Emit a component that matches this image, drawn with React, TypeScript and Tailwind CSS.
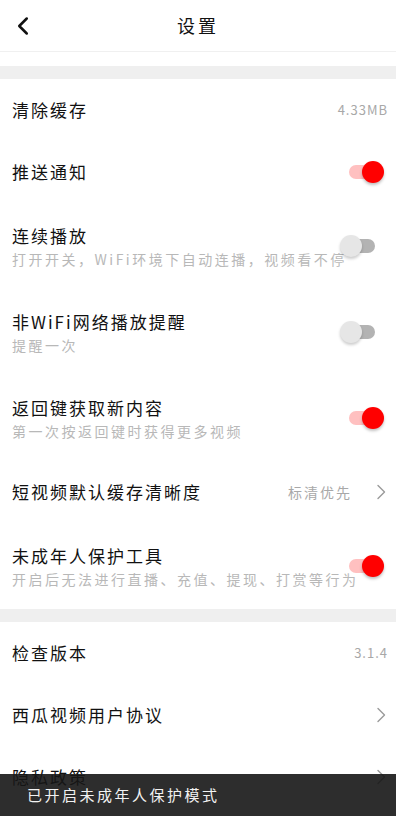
import { ChevronLeft } from "lucide-react";

type Row =
  | { kind: "value"; title: string; value: string }
  | { kind: "toggle"; title: string; sub?: string; on: boolean }
  | { kind: "link"; title: string; value?: string };

const group1: Row[] = [
  { kind: "value", title: "清除缓存", value: "4.33MB" },
  { kind: "toggle", title: "推送通知", on: true },
  { kind: "toggle", title: "连续播放", sub: "打开开关，WiFi环境下自动连播，视频看不停", on: false },
  { kind: "toggle", title: "非WiFi网络播放提醒", sub: "提醒一次", on: false },
  { kind: "toggle", title: "返回键获取新内容", sub: "第一次按返回键时获得更多视频", on: true },
  { kind: "link", title: "短视频默认缓存清晰度", value: "标清优先" },
  { kind: "toggle", title: "未成年人保护工具", sub: "开启后无法进行直播、充值、提现、打赏等行为", on: true },
];

const group2: Row[] = [
  { kind: "value", title: "检查版本", value: "3.1.4" },
  { kind: "link", title: "西瓜视频用户协议" },
  { kind: "link", title: "隐私政策" },
];

function Toggle({ on }: { on: boolean }) {
  return on ? (
    <div className="relative w-[44px] h-[22px] flex items-center">
      <div className="absolute left-[9px] w-[26px] h-[14px] rounded-full bg-[#ffc0c0]" />
      <div className="absolute right-0 w-[22px] h-[22px] rounded-full bg-[#ff0000] shadow-[0_2px_3px_rgba(0,0,0,0.25)]" />
    </div>
  ) : (
    <div className="relative w-[44px] h-[22px] flex items-center">
      <div className="absolute left-[9px] w-[26px] h-[14px] rounded-full bg-[#b3b3b3]" />
      <div className="absolute left-0 w-[22px] h-[22px] rounded-full bg-[#e6e6e6] shadow-[0_2px_3px_rgba(0,0,0,0.2)]" />
    </div>
  );
}

function Chevron() {
  return (
    <svg width="10" height="16" viewBox="0 0 10 16" fill="none" className="shrink-0">
      <polyline points="2,1.5 8.5,8 2,14.5" stroke="#9a9a9a" strokeWidth="1.4" strokeLinecap="round" strokeLinejoin="round" />
    </svg>
  );
}

function SettingRow({ row }: { row: Row }) {
  const sub = row.kind === "toggle" ? row.sub : undefined;
  return (
    <div className={`relative flex items-center pl-3 pr-[14px] bg-white ${sub ? "h-[86px]" : "h-[62px]"}`}>
      <div className="flex-1 min-w-0 overflow-hidden whitespace-nowrap">
        <div className="text-[17px] leading-[24px] tracking-[2px] text-[#111]">{row.title}</div>
        {sub && <div className="mt-[1px] text-[14px] leading-[20px] tracking-[2.5px] text-[#b8b8b8]">{sub}</div>}
      </div>
      {row.kind === "value" && (
        <span className="text-[13px] tracking-[1px] text-[#a8a8a8] -mr-[6px]">{row.value}</span>
      )}
      {row.kind === "link" && (
        <div className="flex items-center gap-[24px] -mr-[4px]">
          {row.value && <span className="text-[14px] tracking-[2px] text-[#a8a8a8]">{row.value}</span>}
          <Chevron />
        </div>
      )}
      {row.kind === "toggle" && (
        <div className="absolute right-[12px] top-1/2 -translate-y-1/2">
          <Toggle on={row.on} />
        </div>
      )}
    </div>
  );
}

export default function App() {
  return (
    <div className="relative w-[396px] h-[816px] overflow-hidden bg-white" style={{ fontFamily: '"Noto Sans CJK SC", "Noto Sans", sans-serif' }}>
      <div className="h-[52px] flex items-center justify-center relative border-b border-[#f0f0f0]">
        <ChevronLeft size={30} strokeWidth={2} className="absolute left-[8px] top-[11px] text-[#111]" />
        <span className="text-[18px] tracking-[3px] text-[#111]">设置</span>
      </div>
      <div className="h-[14px] bg-white" />
      <div className="h-[13px] bg-[#efefef]" />
      {group1.map(r => <SettingRow key={r.title} row={r} />)}
      <div className="h-[13px] bg-[#efefef]" />
      {group2.map(r => <SettingRow key={r.title} row={r} />)}

      <div className="absolute left-0 right-0 bottom-0 h-[42px] bg-[rgba(22,22,22,0.9)] flex items-center pl-[27px]">
        <span className="text-[15px] tracking-[2.5px] text-[#f2f2f2]">已开启未成年人保护模式</span>
      </div>
    </div>
  );
}
